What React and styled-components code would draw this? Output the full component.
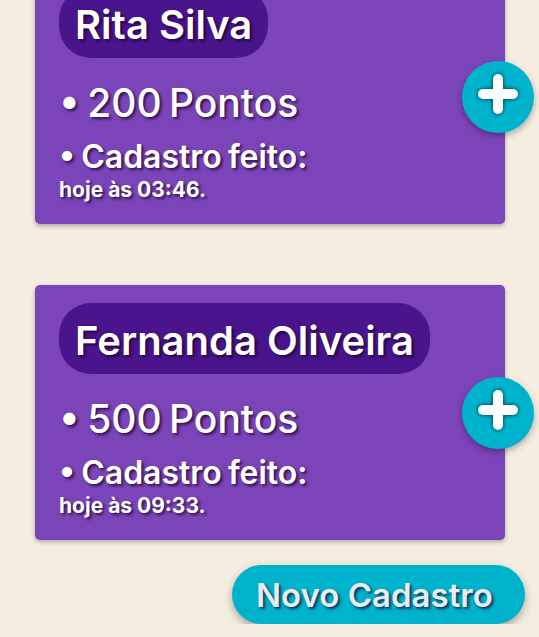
import styled, {createGlobalStyle} from 'styled-components';

const clients = [
  {name: 'Rita Silva', points: 200, time: '03:46'},
  {name: 'Fernanda Oliveira', points: 500, time: '09:33'},
];

const GlobalStyle = createGlobalStyle`
  body {
    margin: 0;
    background: #f5ede0;
    font-family: Inter, "Open Sans", sans-serif;
    overflow: hidden;
  }
`;

export default function App() {
  return (
    <>
      <GlobalStyle />
      <Page>
        <CardList>
          {clients.map((c) => (
            <Card key={c.name}>
              <NamePill>{c.name}</NamePill>
              <Points>• {c.points} Pontos</Points>
              <Label>• Cadastro feito:</Label>
              <Time>hoje às {c.time}.</Time>
              <AddButton aria-label="Adicionar pontos">
                <PlusIcon />
              </AddButton>
            </Card>
          ))}
        </CardList>
        <Footer>
          <NewButton>Novo Cadastro</NewButton>
        </Footer>
      </Page>
    </>
  );
}

function PlusIcon() {
  return (
    <svg width="44" height="44" viewBox="0 0 44 44">
      <g stroke="#ffffff" strokeWidth="10" strokeLinecap="round">
        <line x1="22" y1="7" x2="22" y2="37" />
        <line x1="7" y1="22" x2="37" y2="22" />
      </g>
    </svg>
  );
}

const textShadow = '2px 2px 3px rgba(20, 0, 40, 0.75)';

const Page = styled.div`
  margin-top: -31px;
`;

const CardList = styled.div`
  display: flex;
  flex-direction: column;
  gap: 61px;
  padding: 0 34px 0 35px;
`;

const Card = styled.div`
  position: relative;
  display: flex;
  flex-direction: column;
  align-items: flex-start;
  height: 255px;
  box-sizing: border-box;
  padding: 18px 24px 0;
  background: #7c44b9;
  border-radius: 5px;
  box-shadow: 0 2px 4px rgba(0, 0, 0, 0.3);
  color: #ffffff;
  text-shadow: ${textShadow};
`;

const NamePill = styled.div`
  display: flex;
  align-items: center;
  height: 71px;
  padding: 4px 16px 0;
  box-sizing: border-box;
  border-radius: 32px;
  background: #4a148c;
  font-size: 40px;
  font-weight: 600;
  line-height: 1;
`;

const Points = styled.div`
  margin-top: 21px;
  font-size: 39px;
  font-weight: 500;
  line-height: 48px;
  word-spacing: -3px;
`;

const Label = styled.div`
  margin-top: 12px;
  font-size: 32px;
  font-weight: 600;
  line-height: 36px;
  word-spacing: -2px;
`;

const Time = styled.div`
  margin-top: 3px;
  font-size: 21px;
  font-weight: 700;
  line-height: 24px;
`;

const AddButton = styled.button`
  position: absolute;
  right: -29px;
  top: 50%;
  transform: translateY(-50%);
  width: 72px;
  height: 72px;
  border: none;
  border-radius: 50%;
  padding: 0 0 6px;
  display: flex;
  align-items: center;
  justify-content: center;
  background: #00b3cc;
  box-shadow: 0 3px 6px rgba(0, 0, 0, 0.3);

  svg {
    filter: drop-shadow(0 0 2px rgba(0, 20, 30, 0.9));
  }
`;

const Footer = styled.div`
  display: flex;
  justify-content: flex-end;
  margin-top: 25px;
  padding-right: 14px;
`;

const NewButton = styled.button`
  display: flex;
  align-items: center;
  width: 293px;
  height: 59px;
  padding: 0 0 0 24px;
  border: none;
  border-radius: 30px;
  background: #00b3cc;
  box-shadow: 0 4px 8px rgba(0, 0, 0, 0.3);
  color: #e8eef0;
  font-family: Inter, "Open Sans", sans-serif;
  font-size: 33px;
  font-weight: 600;
  text-shadow: ${textShadow};
`;
